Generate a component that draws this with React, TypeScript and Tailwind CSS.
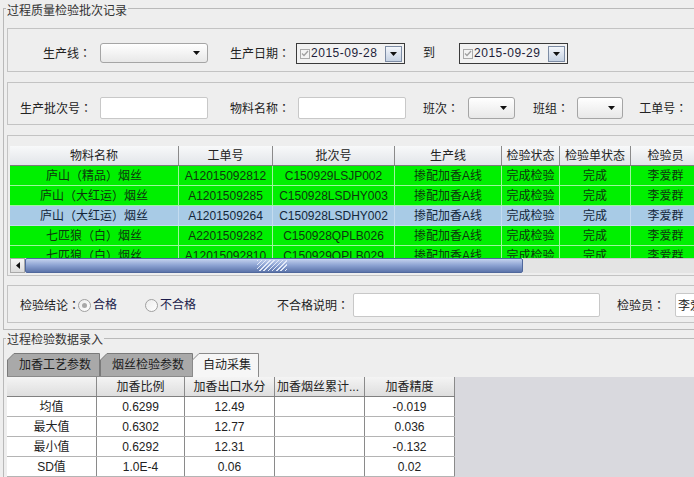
import React from "react";

const FONT = "font-['Liberation_Sans','Noto_Sans_CJK_SC',sans-serif]";

const topCols = ["w-[169px]", "w-[94px]", "w-[122px]", "w-[107px]", "w-[58px]", "w-[71px]", "w-[70px]"];
const topHead = ["物料名称", "工单号", "批次号", "生产线", "检验状态", "检验单状态", "检验员"];

const batches = [
  { brand: "庐山", spec: "精品", order: "A12015092812", batch: "C150929LSJP002", selected: false },
  { brand: "庐山", spec: "大红运", order: "A1201509285", batch: "C150928LSDHY003", selected: false },
  { brand: "庐山", spec: "大红运", order: "A1201509264", batch: "C150928LSDHY002", selected: true },
  { brand: "七匹狼", spec: "白", order: "A2201509282", batch: "C150928QPLB026", selected: false },
  { brand: "七匹狼", spec: "白", order: "A12015092810", batch: "C150929QPLB029", selected: false },
];

const statCols = ["w-[90px]", "w-[88px]", "w-[90px]", "w-[90px]", "w-[90px]"];
const statHead = ["", "加香比例", "加香出口水分", "加香烟丝累计...", "加香精度"];
const stats = [
  ["均值", "0.6299", "12.49", "", "-0.019"],
  ["最大值", "0.6302", "12.77", "", "0.036"],
  ["最小值", "0.6292", "12.31", "", "-0.132"],
  ["SD值", "1.0E-4", "0.06", "", "0.02"],
];

// full-width punctuation sits centred in the TC face, like the original UI font
function P({ children }: { children: React.ReactNode }) {
  return <span className="font-['Noto_Sans_CJK_TC',sans-serif]">{children}</span>;
}

function Label({ text, className = "" }: { text: string; className?: string }) {
  return (
    <span className={`shrink-0 whitespace-nowrap ${className}`}>
      {text}
      <P>：</P>
    </span>
  );
}

function Arrow() {
  return (
    <svg width="7" height="4" viewBox="0 0 7 4">
      <path d="M0 0h7L3.5 4z" fill="#111" />
    </svg>
  );
}

function Combo({ className }: { className: string }) {
  return (
    <div
      className={`flex shrink-0 items-center justify-end rounded-[3px] border border-[#a5a5a5] bg-linear-to-b from-white to-[#e8e8e8] pr-[7px] ${className}`}
    >
      <Arrow />
    </div>
  );
}

function DateBox({ value, className }: { value: string; className: string }) {
  return (
    <div className={`flex h-[21px] w-[109px] shrink-0 items-center border border-[#3a3a3a] bg-[#f2f2f2] pl-[3px] pr-[2px] ${className}`}>
      <span className="flex h-[10px] w-[10px] items-center justify-center border border-[#ababab] bg-[#f4f4f4]">
        <svg width="8" height="7" viewBox="0 0 8 7">
          <path d="M1 3.5l2 2L7 1" stroke="#a0a0a0" strokeWidth="1.3" fill="none" />
        </svg>
      </span>
      <span className="ml-[1px] leading-[19px] tracking-[0.5px] text-[#1e1e3a]">{value}</span>
      <span className="ml-auto flex h-[16px] w-[17px] items-center justify-center border border-[#7d8ca4] bg-linear-to-b from-[#f3f6fb] to-[#c6d2e3]">
        <Arrow />
      </span>
    </div>
  );
}

function Radio({ checked }: { checked?: boolean }) {
  return (
    <span className="flex h-[13px] w-[13px] items-center justify-center rounded-full border border-[#a0a0a0] bg-linear-to-br from-[#ececec] to-white">
      {checked ? <span className="h-[5px] w-[5px] rounded-full bg-[#a8a8a8]" /> : null}
    </span>
  );
}

function Tab({ label, width, active, className }: { label: string; width: number; active?: boolean; className: string }) {
  return (
    <div className={`relative flex h-[24px] shrink-0 items-center justify-center ${className}`}>
      <svg className="absolute left-0 top-0" width={width} height="24">
        <path
          d={`M0.5 24V7L7 0.5H${width - 0.5}V24`}
          fill={active ? "#f6f6f6" : "#a9a9a9"}
          stroke={active ? "#8a8a8a" : "#7a7a7a"}
        />
        {active ? null : <path d={`M0 23.5H${width}`} stroke="#8a8a8a" />}
      </svg>
      <span className={`relative pl-[3px] ${active ? "text-[#222]" : "text-[#1c1c1c]"}`}>{label}</span>
    </div>
  );
}

export default function App() {
  return (
    <div className={`h-[477px] w-[694px] overflow-hidden bg-[#eeeeee] text-[12px] text-[#222] ${FONT}`}>
      <section className="relative ml-[3px] mt-[8px] h-[322px] border-y border-l border-[#b9b9b9] pl-[3px] pt-[19px]">
        <span className="absolute -top-[6px] left-[2px] bg-[#eeeeee] px-[1px] leading-[16px] text-[#333]">
          过程质量检验批次记录
        </span>

        <div className="flex h-[44px] w-[700px] items-start whitespace-nowrap border border-[#c3c3c3] pl-[35px] pt-[14px] leading-[20px]">
          <Label text="生产线" />
          <Combo className="ml-[9px] h-[20px] w-[108px]" />
          <Label text="生产日期" className="ml-[22px]" />
          <DateBox value="2015-09-28" className="ml-[6px]" />
          <span className="ml-[18px] shrink-0">到</span>
          <DateBox value="2015-09-29" className="ml-[24px]" />
        </div>

        <div className="mt-[10px] flex h-[43px] w-[700px] items-start whitespace-nowrap border border-[#c3c3c3] pl-[12px] pt-[14px] leading-[22px]">
          <Label text="生产批次号" />
          <div className="ml-[8px] h-[22px] w-[108px] shrink-0 rounded-[2px] border border-[#c8c8c8] bg-white" />
          <Label text="物料名称" className="ml-[22px]" />
          <div className="ml-[8px] h-[22px] w-[108px] shrink-0 rounded-[2px] border border-[#c8c8c8] bg-white" />
          <Label text="班次" className="ml-[17px]" />
          <Combo className="ml-[9px] h-[22px] w-[47px]" />
          <Label text="班组" className="ml-[18px]" />
          <Combo className="ml-[8px] h-[22px] w-[46px]" />
          <Label text="工单号" className="ml-[16px]" />
        </div>

        <div className="mt-[10px] h-[141px] w-[700px] border border-[#c3c3c3] pl-[2px] pt-[10px]">
          <div className="h-[112px] overflow-hidden">
            <div className="flex h-[20px] border-b border-[#7a7a7a] bg-linear-to-b from-[#f8f9fa] to-[#e2e5e9]">
              {topHead.map((h, i) => (
                <div key={h} className={`flex shrink-0 items-center justify-center border-r border-[#8a8a8a] ${topCols[i]}`}>
                  {h}
                </div>
              ))}
            </div>
            {batches.map((b, r) => {
              const cells: React.ReactNode[] = [
                <>
                  {b.brand}
                  <P>（</P>
                  {b.spec}
                  <P>）</P>
                  烟丝
                </>,
                b.order,
                b.batch,
                "掺配加香A线",
                "完成检验",
                "完成",
                "李爱群",
              ];
              return (
                <div
                  key={r}
                  className={`flex h-[20px] border-b ${
                    b.selected
                      ? "border-[#c4dcf0] bg-[#a8cbe6] text-[#14263a]"
                      : "border-[#9cf59c] bg-[#00f000] text-[#0e360e]"
                  }`}
                >
                  {cells.map((c, i) => (
                    <div
                      key={i}
                      className={`flex shrink-0 items-center justify-center whitespace-nowrap border-r ${
                        b.selected ? "border-[#c4dcf0]" : "border-[#9cf59c]"
                      } ${topCols[i]}`}
                    >
                      {c}
                    </div>
                  ))}
                </div>
              );
            })}
          </div>
          <div className="flex h-[15px]">
            <div className="flex w-[15px] shrink-0 items-center justify-center border border-[#a8a8a8] bg-linear-to-b from-[#f6f6f6] to-[#dcdcdc]">
              <svg width="4" height="7" viewBox="0 0 4 7">
                <path d="M4 0v7L0 3.5z" fill="#111" />
              </svg>
            </div>
            <div className="flex w-[498px] shrink-0 items-center justify-center rounded-[2px] border border-[#50689c] bg-linear-to-b from-[#c4d2ee] via-[#8ba1d1] to-[#5c74aa]">
              <div className="-ml-[4px] h-[11px] w-[30px] bg-[repeating-linear-gradient(135deg,#e2e9f8_0px,#e2e9f8_1px,transparent_1px,transparent_3px)]" />
            </div>
            <div className="flex-1 border-t border-[#c8c8c8] bg-[#e4e4e4]" />
          </div>
        </div>

        <div className="mt-[9px] flex h-[38px] w-[700px] items-start whitespace-nowrap border border-[#c3c3c3] pl-[12px] pt-[7px] leading-[24px]">
          <Label text="检验结论" className="w-[58px]" />
          <div className="flex h-[24px] shrink-0 items-center">
            <Radio checked />
          </div>
          <span className="ml-[2px] shrink-0 text-[#1c1c4c]">合格</span>
          <div className="ml-[28px] flex h-[24px] shrink-0 items-center">
            <Radio />
          </div>
          <span className="ml-[2px] shrink-0 text-[#1c1c4c]">不合格</span>
          <Label text="不合格说明" className="ml-[81px]" />
          <div className="ml-[4px] h-[24px] w-[247px] shrink-0 rounded-[2px] border border-[#c8c8c8] bg-white" />
          <Label text="检验员" className="ml-[17px]" />
          <div className="ml-[10px] h-[24px] w-[60px] shrink-0 rounded-[2px] border border-[#c8c8c8] bg-white pl-[2px]">
            李爱群
          </div>
        </div>
      </section>

      <section className="relative ml-[3px] mt-[8px] h-[139px] border-l border-t border-[#b9b9b9] pl-[3px] pt-[14px]">
        <span className="absolute -top-[7px] left-[2px] bg-[#eeeeee] px-[1px] leading-[16px] text-[#333]">
          过程检验数据录入
        </span>
        <div className="flex">
          <Tab label="加香工艺参数" width={93} className="w-[93px]" />
          <Tab label="烟丝检验参数" width={93} className="w-[93px]" />
          <Tab label="自动采集" width={67} active className="-ml-[1px] w-[67px]" />
        </div>
        <div className="flex h-[100px]">
          <div className="w-[448px] shrink-0">
            <div className="flex h-[20px] border-b border-[#808080] bg-linear-to-b from-[#f4f4f4] to-[#dedede]">
              {statHead.map((h, i) => (
                <div
                  key={i}
                  className={`flex shrink-0 items-center overflow-hidden whitespace-nowrap border-r border-[#8a8a8a] ${
                    i === 3 ? "justify-start pl-[2px]" : "justify-center"
                  } ${statCols[i]}`}
                >
                  {h}
                </div>
              ))}
            </div>
            {stats.map((row, r) => (
              <div key={r} className="flex h-[20px] border-b border-[#b4b4b4] bg-white">
                {row.map((c, i) => (
                  <div
                    key={i}
                    className={`flex shrink-0 items-center justify-center border-r border-[#8a8a8a] ${statCols[i]}`}
                  >
                    {c}
                  </div>
                ))}
              </div>
            ))}
          </div>
          <div className="flex-1 bg-[#d9d9de]" />
        </div>
      </section>
    </div>
  );
}
